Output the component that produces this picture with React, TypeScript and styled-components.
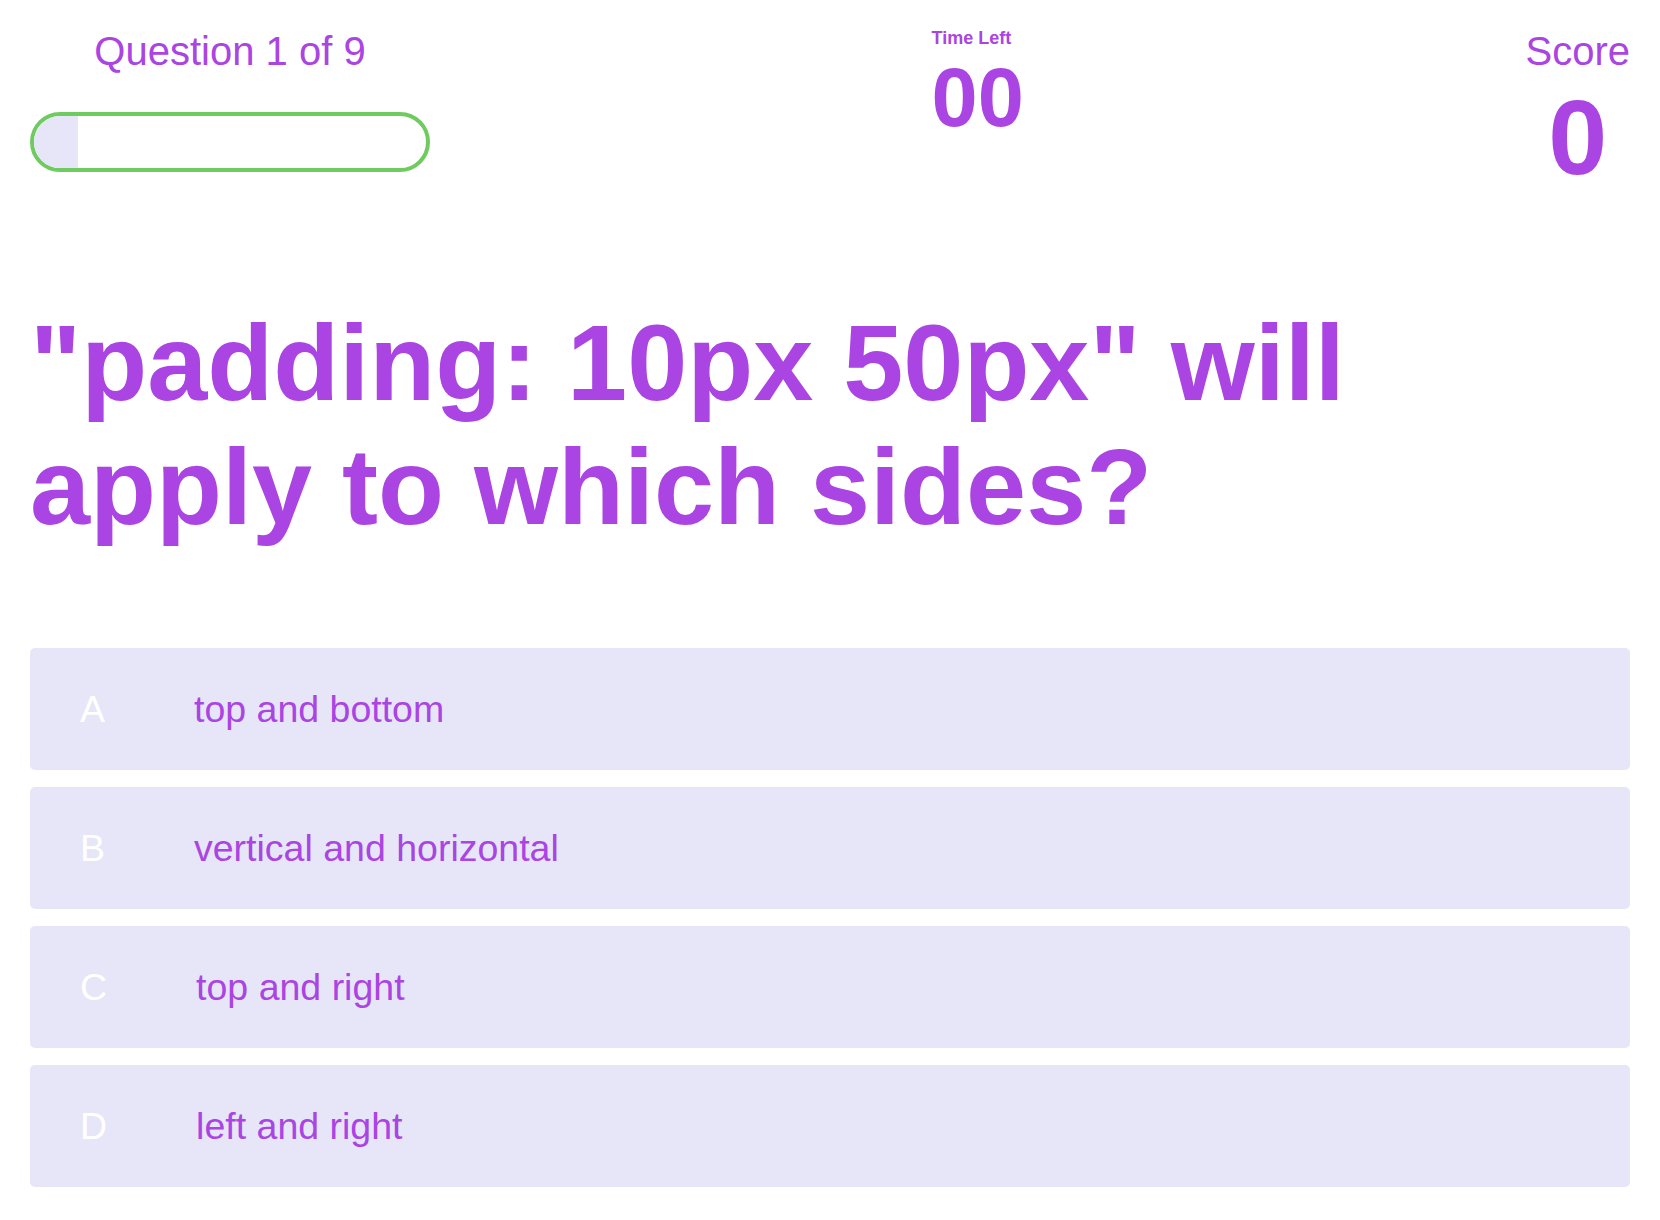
import React from "react";
import styled, { createGlobalStyle } from "styled-components";

const PURPLE = "#aa44e2";
const LAVENDER = "#e6e6f8";
const GREEN = "#6fcb5f";

const GlobalStyle = createGlobalStyle`
  html, body {
    margin: 0;
    padding: 0;
    background: #ffffff;
  }
  body {
    font-family: "Liberation Sans", Arial, Helvetica, sans-serif;
    color: ${PURPLE};
  }
`;

const Page = styled.main`
  width: 1600px;
  margin: 0 auto;
  padding-top: 28px;
  padding-bottom: 30px;
`;

const Header = styled.header`
  display: flex;
  justify-content: space-between;
  align-items: flex-start;
`;

const ProgressColumn = styled.section`
  width: 400px;
  display: flex;
  flex-direction: column;
  align-items: center;
`;

const HeaderLabel = styled.h2`
  margin: 0;
  font-size: 40px;
  font-weight: 400;
  line-height: 46px;
  color: ${PURPLE};
`;

const ProgressTrack = styled.div`
  box-sizing: border-box;
  width: 400px;
  height: 60px;
  margin-top: 38px;
  border: 4px solid ${GREEN};
  border-radius: 30px;
  overflow: hidden;
  background: #ffffff;
`;

const ProgressFill = styled.div`
  height: 100%;
  background: ${LAVENDER};
`;

const TimerColumn = styled.section`
  display: flex;
  flex-direction: column;
  align-items: flex-start;
`;

const TimerLabel = styled.h3`
  margin: 0;
  font-size: 18px;
  font-weight: 700;
  line-height: 21px;
  color: ${PURPLE};
`;

const TimerValue = styled.div`
  font-size: 83px;
  font-weight: 700;
  line-height: 98px;
  color: ${PURPLE};
`;

const ScoreColumn = styled.section`
  display: flex;
  flex-direction: column;
  align-items: center;
`;

const ScoreValue = styled.div`
  font-size: 106px;
  font-weight: 700;
  line-height: 126px;
  color: ${PURPLE};
`;

const QuestionText = styled.h1`
  margin: 101px 0 0;
  font-size: 108px;
  font-weight: 700;
  line-height: 124px;
  color: ${PURPLE};
`;

const AnswerList = styled.ol`
  list-style: none;
  margin: 99px 0 0;
  padding: 0;
  display: flex;
  flex-direction: column;
  gap: 17px;
`;

const AnswerItem = styled.li`
  box-sizing: border-box;
  height: 122px;
  display: flex;
  align-items: center;
  padding-left: 50px;
  background: ${LAVENDER};
  border-radius: 5px;
  font-size: 37.5px;
  line-height: 43px;
  cursor: pointer;
`;

const AnswerLetter = styled.span`
  color: #ffffff;
  margin-right: 89px;
`;

const AnswerText = styled.span`
  color: ${PURPLE};
`;

const answers = [
  { letter: "A", text: "top and bottom" },
  { letter: "B", text: "vertical and horizontal" },
  { letter: "C", text: "top and right" },
  { letter: "D", text: "left and right" },
];

export default function App() {
  const current = 1;
  const total = 9;
  return (
    <>
      <GlobalStyle />
      <Page>
        <Header>
          <ProgressColumn>
            <HeaderLabel>
              Question {current} of {total}
            </HeaderLabel>
            <ProgressTrack>
              <ProgressFill style={{ width: `${(current / total) * 100}%` }} />
            </ProgressTrack>
          </ProgressColumn>
          <TimerColumn>
            <TimerLabel>Time Left</TimerLabel>
            <TimerValue>00</TimerValue>
          </TimerColumn>
          <ScoreColumn>
            <HeaderLabel>Score</HeaderLabel>
            <ScoreValue>0</ScoreValue>
          </ScoreColumn>
        </Header>
        <QuestionText>
          "padding: 10px 50px" will apply to which sides?
        </QuestionText>
        <AnswerList>
          {answers.map((a) => (
            <AnswerItem key={a.letter}>
              <AnswerLetter>{a.letter}</AnswerLetter>
              <AnswerText>{a.text}</AnswerText>
            </AnswerItem>
          ))}
        </AnswerList>
      </Page>
    </>
  );
}
